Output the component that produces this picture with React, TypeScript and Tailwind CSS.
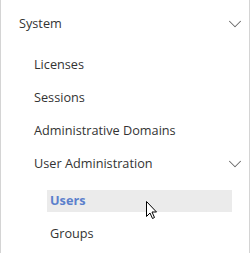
import { ChevronDown } from "lucide-react";

const subItems = ["Licenses", "Sessions", "Administrative Domains"];

function Cursor() {
  return (
    <svg
      className="absolute left-[146px] top-[201px]"
      width="12"
      height="19"
      viewBox="0 0 12 19"
    >
      <path
        d="M0.5 0.5 L0.5 15.5 L4 12 L6.5 17.5 L8.5 16.5 L6 11 L10.5 11 Z"
        fill="#fff"
        stroke="#000"
        strokeWidth="1"
        strokeLinejoin="miter"
      />
    </svg>
  );
}

export default function App() {
  return (
    <div className="relative w-[251px] h-[253px] bg-white font-['Open_Sans',sans-serif] text-[12.7px] text-[#333]">
      <div className="w-[250px] h-[253px] border-l border-r border-[#d4d4d4] flex flex-col">
        <div className="flex items-center justify-between h-[48px] pl-[18px] pr-[3px]">
          <span>System</span>
          <ChevronDown className="w-[22px] h-[22px] text-[#666]" strokeWidth={1.1} />
        </div>
        {subItems.map((item) => (
          <div key={item} className="flex items-center h-[33px] pl-[33px]">
            {item}
          </div>
        ))}
        <div className="flex items-center justify-between h-[33px] pl-[33px] pr-[3px]">
          <span>User Administration</span>
          <ChevronDown className="w-[22px] h-[22px] text-[#666]" strokeWidth={1.1} />
        </div>
        <div className="pl-[46px] pr-[17px] pt-[10px]">
          <div className="flex items-center h-[22px] pl-[3px] bg-[#ebebeb] font-bold text-[#5b80cc]">
            Users
          </div>
          <div className="flex items-center h-[33px] pl-[3px] mt-[5px]">Groups</div>
        </div>
      </div>
      <Cursor />
    </div>
  );
}
